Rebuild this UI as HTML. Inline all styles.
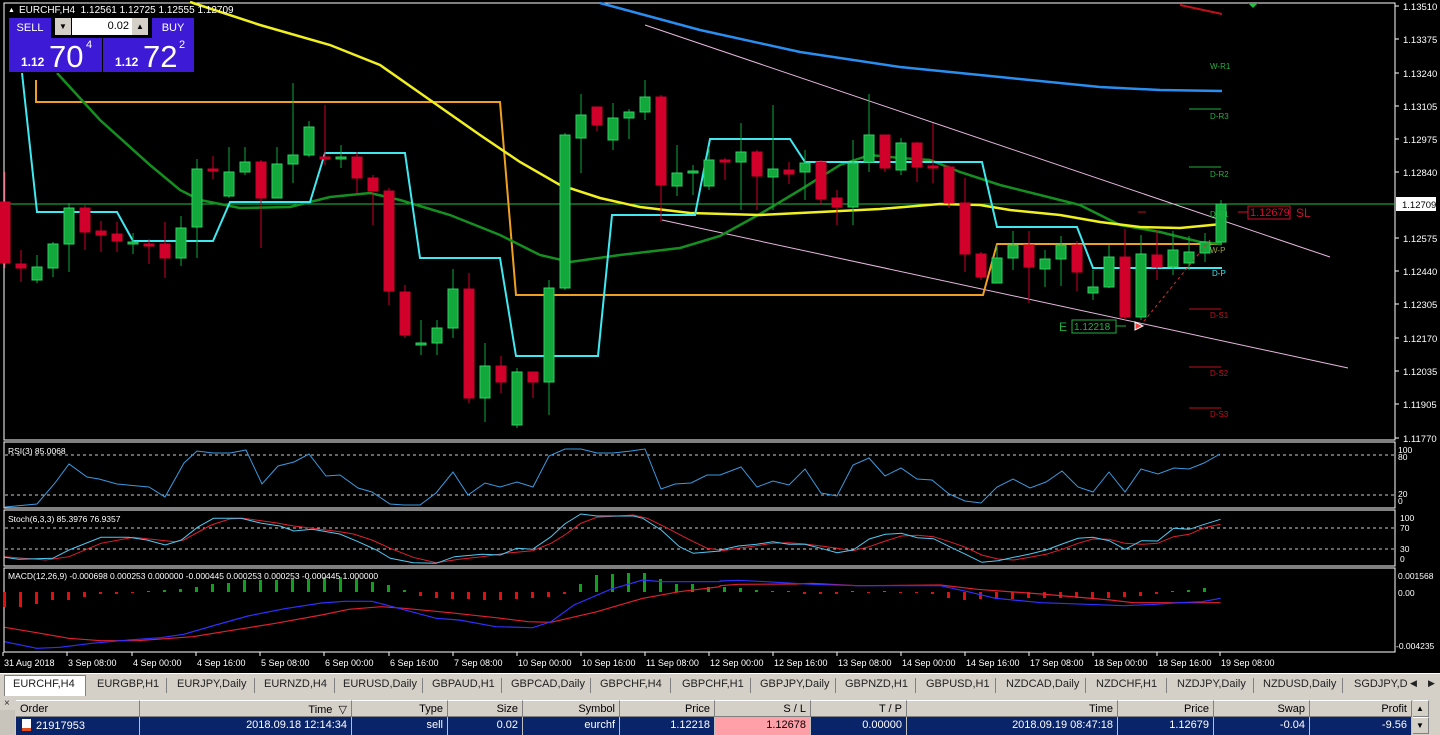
<!DOCTYPE html>
<html><head><meta charset="utf-8"><style>
*{margin:0;padding:0;box-sizing:border-box}
body{width:1440px;height:735px;background:#000;overflow:hidden;position:relative;font-family:"Liberation Sans",sans-serif}
svg{position:absolute;left:0;top:0}
.tabs{position:absolute;left:0;top:673px;width:1440px;height:23px;background:#d4d0c8;border-top:1px solid #fff;font-size:11px;color:#222}
.tabs span{position:absolute;top:4px;white-space:nowrap}
.tabs i{position:absolute;top:4px;width:1px;height:15px;background:#808080}
.tbl{position:absolute;left:0;top:696px;width:1440px;height:39px;background:#d4d0c8;font-size:11px}
.hd,.rw{position:absolute;height:17px;padding:2px 4px 0;white-space:nowrap;overflow:hidden}
.hd{top:4px;background:#d4d0c8;border-right:1px solid #808080;border-bottom:1px solid #808080;border-top:1px solid #fff;color:#000}
.rw{top:21px;background:#0a246a;color:#fff;border-right:1px solid #c0c0c0;height:18px}
.r{text-align:right}
</style></head><body>
<svg width="1440" height="673" id="s" xmlns="http://www.w3.org/2000/svg" font-family="Liberation Sans, sans-serif"></svg>

<div style="position:absolute;left:8px;top:17px;width:187px;height:56px;background:#000">
 <div style="position:absolute;left:1px;top:1px;width:42px;height:20px;background:#3c1ad6;color:#fff;font-size:11px;text-align:center;line-height:20px">SELL</div>
 <div style="position:absolute;left:47px;top:1px;width:16px;height:17px;background:#d4d0c8;font-size:8px;text-align:center;line-height:17px">▼</div>
 <div style="position:absolute;left:64px;top:1px;width:60px;height:17px;background:#fff;font-size:11px;text-align:right;padding-right:3px;line-height:17px">0.02</div>
 <div style="position:absolute;left:124px;top:1px;width:16px;height:17px;background:#d4d0c8;font-size:8px;text-align:center;line-height:17px">▲</div>
 <div style="position:absolute;left:144px;top:1px;width:42px;height:20px;background:#3c1ad6;color:#fff;font-size:11px;text-align:center;line-height:20px">BUY</div>
 <div style="position:absolute;left:1px;top:21px;width:93px;height:34px;background:#3c1ad6;color:#fff">
  <span style="position:absolute;left:12px;top:17px;font-size:12px;font-weight:bold">1.12</span>
  <span style="position:absolute;left:40px;top:1px;font-size:31px">70</span>
  <span style="position:absolute;left:77px;top:1px;font-size:11px">4</span></div>
 <div style="position:absolute;left:95px;top:21px;width:91px;height:34px;background:#3c1ad6;color:#fff">
  <span style="position:absolute;left:12px;top:17px;font-size:12px;font-weight:bold">1.12</span>
  <span style="position:absolute;left:40px;top:1px;font-size:31px">72</span>
  <span style="position:absolute;left:76px;top:1px;font-size:11px">2</span></div>
</div>

<div class="tabs">
 <div style="position:absolute;left:4px;top:1px;width:82px;height:21px;background:#fff;border:1px solid #808080;border-bottom:none"></div>
 <span style="left:13px">EURCHF,H4</span>
 <span style="left:97px">EURGBP,H1</span><i style="left:166px"></i>
 <span style="left:177px">EURJPY,Daily</span><i style="left:254px"></i>
 <span style="left:264px">EURNZD,H4</span><i style="left:334px"></i>
 <span style="left:343px">EURUSD,Daily</span><i style="left:422px"></i>
 <span style="left:432px">GBPAUD,H1</span><i style="left:501px"></i>
 <span style="left:511px">GBPCAD,Daily</span><i style="left:590px"></i>
 <span style="left:600px">GBPCHF,H4</span><i style="left:670px"></i>
 <span style="left:682px">GBPCHF,H1</span><i style="left:750px"></i>
 <span style="left:760px">GBPJPY,Daily</span><i style="left:835px"></i>
 <span style="left:845px">GBPNZD,H1</span><i style="left:915px"></i>
 <span style="left:926px">GBPUSD,H1</span><i style="left:995px"></i>
 <span style="left:1006px">NZDCAD,Daily</span><i style="left:1085px"></i>
 <span style="left:1096px">NZDCHF,H1</span><i style="left:1166px"></i>
 <span style="left:1177px">NZDJPY,Daily</span><i style="left:1253px"></i>
 <span style="left:1263px">NZDUSD,Daily</span><i style="left:1342px"></i>
 <span style="left:1354px">SGDJPY,D</span>
 <span style="left:1410px;font-size:9px">◀</span><span style="left:1428px;font-size:9px">▶</span>
</div>

<div class="tbl">
 <div style="position:absolute;left:4px;top:2px;font-size:10px;color:#333">×</div>
 <div style="position:absolute;left:0;top:14px;width:15px;height:25px;background:#c8c4bc"></div>
 <div class="hd" style="left:16px;width:124px">Order</div>
 <div class="hd r" style="left:140px;width:212px">Time &nbsp;▽</div>
 <div class="hd r" style="left:352px;width:96px">Type</div>
 <div class="hd r" style="left:448px;width:75px">Size</div>
 <div class="hd r" style="left:523px;width:97px">Symbol</div>
 <div class="hd r" style="left:620px;width:95px">Price</div>
 <div class="hd r" style="left:715px;width:96px">S / L</div>
 <div class="hd r" style="left:811px;width:96px">T / P</div>
 <div class="hd r" style="left:907px;width:211px">Time</div>
 <div class="hd r" style="left:1118px;width:96px">Price</div>
 <div class="hd r" style="left:1214px;width:96px">Swap</div>
 <div class="hd r" style="left:1310px;width:102px">Profit</div>
 <div class="hd" style="left:1413px;width:16px;font-size:8px;padding:3px 3px">▲</div>
 <div class="rw" style="left:16px;width:124px;padding-left:6px"><span style="display:inline-block;width:9px;height:12px;background:#fff;vertical-align:-2px;margin-right:5px;border-bottom:3px solid #e05020"></span>21917953</div>
 <div class="rw r" style="left:140px;width:212px">2018.09.18 12:14:34</div>
 <div class="rw r" style="left:352px;width:96px">sell</div>
 <div class="rw r" style="left:448px;width:75px">0.02</div>
 <div class="rw r" style="left:523px;width:97px">eurchf</div>
 <div class="rw r" style="left:620px;width:95px">1.12218</div>
 <div class="rw r" style="left:715px;width:96px;background:#ffa0a8;color:#000">1.12678</div>
 <div class="rw r" style="left:811px;width:96px">0.00000</div>
 <div class="rw r" style="left:907px;width:211px">2018.09.19 08:47:18</div>
 <div class="rw r" style="left:1118px;width:96px">1.12679</div>
 <div class="rw r" style="left:1214px;width:96px">-0.04</div>
 <div class="rw r" style="left:1310px;width:102px">-9.56</div>
 <div class="hd" style="left:1413px;top:21px;width:16px;font-size:8px;padding:3px 3px">▼</div>
</div>

<script>
const S=document.getElementById('s');let h='';
const G='#12a83c',GB='#2ed060',R='#d0002a';
function pl(pts,c,w,extra){h+=`<polyline fill="none" stroke="${c}" stroke-width="${w}" points="${pts.map(p=>p.join(',')).join(' ')}" ${extra||''}/>`}
function ln(x1,y1,x2,y2,c,w,extra){h+=`<line x1="${x1}" y1="${y1}" x2="${x2}" y2="${y2}" stroke="${c}" stroke-width="${w||1}" ${extra||''}/>`}
function tx(x,y,t,c,s,extra){h+=`<text x="${x}" y="${y}" fill="${c}" font-size="${s||10}" ${extra||''}>${t}</text>`}
// panel borders
h+=`<rect x="4" y="3" width="1391" height="437" fill="none" stroke="#fff"/>`;
h+=`<rect x="4" y="442" width="1391" height="66" fill="none" stroke="#fff"/>`;
h+=`<rect x="4" y="510" width="1391" height="56" fill="none" stroke="#fff"/>`;
h+=`<rect x="4" y="568" width="1391" height="84" fill="none" stroke="#fff"/>`;
// price axis
[[6,'1.13510'],[39,'1.13375'],[73,'1.13240'],[106,'1.13105'],[139,'1.12975'],[172,'1.12840'],[238,'1.12575'],[271,'1.12440'],[304,'1.12305'],[338,'1.12170'],[371,'1.12035'],[404,'1.11905'],[438,'1.11770']].forEach(a=>{ln(1395,a[0],1399,a[0],'#fff');tx(1403,a[0]+4,a[1],'#fff',9.5)});
// candles
const C=[[202,263,172,268,'r'],[264,268,250,282,'r'],[267,280,255,283,'g'],[244,268,242,277,'g'],[208,244,203,272,'g'],[208,232,205,250,'r'],[231,235,221,252,'r'],[234,241,222,252,'r'],[242,244,233,254,'g'],[244,246,239,264,'r'],[244,258,222,278,'r'],[228,258,216,266,'g'],
[169,227,159,258,'g'],[169,171,156,179,'r'],[172,196,147,198,'g'],[162,172,147,175,'g'],[162,198,160,248,'r'],[164,198,147,198,'g'],[155,164,83,183,'g'],[127,155,121,157,'g'],[157,159,105,165,'r'],[157,159,145,168,'g'],[157,178,152,193,'r'],[178,191,175,225,'r'],[191,291,188,305,'r'],[292,335,285,338,'r'],[343,345,320,355,'g'],[328,343,320,355,'g'],[289,328,269,338,'g'],[289,398,273,403,'r'],[366,398,343,422,'g'],[366,382,356,393,'r'],[372,425,368,428,'g'],[372,382,372,398,'r'],
[288,382,280,415,'g'],[135,288,133,290,'g'],[115,138,94,173,'g'],[107,125,107,131,'r'],[118,140,103,150,'g'],[112,118,109,139,'g'],[97,112,80,120,'g'],[97,185,95,222,'r'],[173,186,145,196,'g'],[171,173,165,195,'g'],[160,186,147,190,'g'],[160,162,158,180,'r'],[152,162,123,210,'g'],[152,176,150,210,'r'],[169,177,105,210,'g'],[170,174,162,184,'r'],[163,172,150,200,'g'],[162,199,160,205,'r'],[198,207,190,225,'r'],[163,207,140,225,'g'],[135,162,94,172,'g'],[135,168,135,172,'r'],[143,170,138,175,'g'],[143,167,142,182,'r'],[166,168,123,183,'r'],[167,203,165,208,'r'],[203,254,178,272,'r'],[254,277,252,280,'r'],[258,283,245,283,'g'],[245,258,231,270,'g'],[245,267,231,303,'r'],[259,269,250,287,'g'],[245,259,236,286,'g'],[245,272,241,291,'r'],[287,293,270,300,'g'],[257,287,245,288,'g'],[257,317,229,320,'r'],[254,317,235,320,'g'],[255,267,230,280,'r'],[250,267,231,275,'g'],[252,263,236,270,'g'],[242,253,233,262,'g'],[204,242,200,244,'g']];
// lines under candles
ln(4,204,1395,204,'#22c040',1);
pl([[645,25],[1330,257]],'#e8b8e0',1);pl([[662,220],[1348,368]],'#e8b8e0',1);
pl([[600,3],[700,30],[800,52],[900,67],[1000,77],[1100,87],[1160,90],[1222,91]],'#2a8ef0',2.5);
pl([[1180,5],[1222,14]],'#c0101a',2);
pl([[36,80],[36,102],[500,102],[516,295],[983,295],[997,244],[1222,244]],'#f0a020',2);
pl([[57,73],[100,120],[150,165],[180,190],[200,200],[240,208],[290,207],[330,197],[370,193],[400,200],[450,215],[500,235],[540,255],[570,262],[620,255],[680,248],[720,236],[760,214],[800,190],[840,165],[870,155],[900,158],[930,160],[960,172],[1000,185],[1040,195],[1080,205],[1120,225],[1160,232],[1200,242],[1222,244]],'#159020',2.5);
pl([[190,2],[260,25],[330,45],[380,65],[430,100],[480,135],[520,162],[560,185],[600,198],[640,207],[690,213],[760,215],[820,212],[880,209],[940,204],[980,205],[1010,210],[1060,215],[1100,222],[1140,227],[1180,228],[1222,224]],'#f0f020',2.5);
pl([[22,73],[37,212],[117,212],[133,241],[213,241],[230,202],[310,202],[325,153],[405,153],[420,258],[500,258],[516,356],[598,356],[612,215],[695,215],[710,139],[790,139],[805,162],[982,162],[997,227],[1077,227],[1093,268],[1222,268]],'#40e8f0',2);
C.forEach((c,i)=>{const x=5+16*i,col=c[4]=='g'?G:R;ln(x,c[2],x,c[3],col,1);let t=c[0],b=c[1];if(b-t<2){ln(x-5,t,x+5,t,col,2)}else h+=`<rect x="${x-5}" y="${t}" width="10" height="${b-t}" fill="${col}" stroke="${c[4]=='g'?GB:R}" stroke-width="1"/>`});
// pivots
tx(1210,69,'W-R1','#22b040',8);
ln(1189,109,1221,109,'#22b040');tx(1210,119,'D-R3','#22b040',8);
ln(1189,167,1221,167,'#22b040');tx(1210,177,'D-R2','#22b040',8);
tx(1210,217,'D-R1','#22b040',8);tx(1210,253,'W-P','#a0a040',8);tx(1212,276,'D-P','#40e8f0',8);
ln(1189,309,1221,309,'#c01020');tx(1210,318,'D-S1','#c01020',8);
ln(1189,367,1221,367,'#c01020');tx(1210,376,'D-S2','#c01020',8);
ln(1189,408,1221,408,'#c01020');tx(1210,417,'D-S3','#c01020',8);
ln(1138,212,1146,212,'#c01020');
h+=`<polygon points="1248,3 1258,3 1253,8" fill="#20c040"/>`;
ln(1238,212,1248,212,'#d01030');h+=`<rect x="1248" y="206" width="42" height="13" fill="none" stroke="#d01030"/>`;tx(1250,216,'1.12679','#d01030',11);tx(1296,217,'SL','#d01030',12);
h+=`<rect x="1072" y="320" width="44" height="13" fill="none" stroke="#22b040"/>`;tx(1074,330,'1.12218','#22b040',10);tx(1059,331,'E','#22b040',12);ln(1116,326,1126,326,'#22b040');
pl([[1140,326],[1210,240]],'#d03030',1,'stroke-dasharray="3,3"');
h+=`<polygon points="1135,322 1143,326 1135,330" fill="#f04040" stroke="#fff" stroke-width="1"/>`;
h+=`<rect x="1396" y="197" width="40" height="14" fill="#fff"/>`;tx(1402,208,'1.12709','#000',9.5);
tx(8,12,'▲','#fff',7);tx(19,13,'EURCHF,H4  1.12561 1.12725 1.12555 1.12709','#fff',10,'xml:space="preserve"');
// RSI
ln(5,455,1394,455,'#ccc',1,'stroke-dasharray="3,3"');ln(5,495,1394,495,'#ccc',1,'stroke-dasharray="3,3"');
pl([[5,507],[37,504],[55,483],[69,464],[87,477],[99,479],[117,484],[138,486],[149,487],[165,497],[184,463],[197,451],[213,453],[230,453],[246,450],[262,484],[278,466],[294,462],[309,454],[326,476],[340,475],[358,488],[372,492],[390,504],[404,505],[420,505],[436,493],[453,472],[468,495],[485,483],[500,487],[517,482],[533,487],[549,456],[565,449],[581,449],[597,453],[613,453],[631,451],[645,449],[661,489],[675,484],[691,483],[707,475],[720,475],[741,467],[757,487],[773,481],[789,485],[805,469],[821,493],[837,496],[853,465],[869,458],[885,476],[901,468],[917,479],[932,480],[949,494],[965,501],[981,503],[997,487],[1013,479],[1030,488],[1046,482],[1062,471],[1078,487],[1093,492],[1109,472],[1125,492],[1141,469],[1158,474],[1174,468],[1189,469],[1204,463],[1220,454]],'#3a9ae0',1);
tx(8,454,'RSI(3) 85.0068','#fff',8.5);
tx(1398,453,'100','#fff',8.5);tx(1398,460,'80','#fff',8.5);tx(1398,497,'20','#fff',8.5);tx(1398,504,'0','#fff',8.5);
// Stoch
ln(5,528,1394,528,'#ccc',1,'stroke-dasharray="3,3"');ln(5,549,1394,549,'#ccc',1,'stroke-dasharray="3,3"');
const cv=(a,ox)=>a.map(p=>[+(ox+p[0]/2.178).toFixed(1),+(440+p[1]/3).toFixed(1)]);
const sb1=[[10,352],[40,358],[115,355],[150,330],[220,292],[280,292],[320,300],[360,315],[395,300],[430,262],[465,235],[525,235],[570,250],[610,258],[640,273],[680,268],[740,282],[780,305],[820,330],[850,355],[900,368],[950,370],[990,350],[1050,343],[1090,345],[1125,325],[1160,328],[1200,290],[1230,252],[1265,222],[1300,228],[1380,228],[1400,235],[1440,270],[1480,320],[1510,340],[1568,333]];
const sb2=[[0,330],[40,318],[80,313],[115,305],[150,313],[185,313],[220,325],[255,338],[290,330],[325,297],[360,283],[395,280],[430,293],[465,296],[500,320],[535,343],[570,367],[605,362],[640,352],[675,342],[710,330],[745,312],[780,295],[812,292],[848,302],[882,328],[918,302],[953,303],[988,265],[1022,268],[1055,253],[1090,238]];
const sr1=[[10,350],[100,360],[150,350],[220,310],[290,292],[330,298],[380,305],[400,300],[460,255],[500,237],[530,235],[600,248],[640,258],[680,265],[740,275],[770,282],[810,300],[850,325],[900,352],[950,368],[1000,358],[1050,350],[1100,340],[1160,332],[1200,310],[1230,285],[1265,250],[1300,232],[1380,225],[1410,235],[1450,262],[1500,298],[1540,325],[1568,330]];
const sr2=[[0,333],[40,325],[80,317],[115,310],[150,308],[185,312],[220,318],[255,325],[290,332],[325,320],[360,303],[395,288],[430,286],[465,290],[500,305],[535,322],[570,345],[605,357],[640,360],[675,352],[710,343],[745,328],[780,310],[812,297],[848,298],[882,310],[918,313],[953,310],[988,290],[1022,283],[1055,263],[1090,253]];
pl(cv(sr1,0).concat(cv(sr2,720)),'#e02030',1);
pl(cv(sb1,0).concat(cv(sb2,720)),'#50c8f0',1);
tx(8,522,'Stoch(6,3,3) 85.3976 76.9357','#fff',8.5);
tx(1400,521,'100','#fff',8.5);tx(1400,531,'70','#fff',8.5);tx(1400,552,'30','#fff',8.5);tx(1400,562,'0','#fff',8.5);
// MACD
const hv=[-15,-15,-12,-8,-8,-5,-2,-2,-1,1,2,3,5,8,9,12,12,12,13,13,15,15,13,10,7,2,-4,-6,-7,-7,-8,-8,-7,-6,-5,-2,8,17,18,19,19,13,8,8,5,5,4,2,1,1,-2,-2,-2,1,-1,1,-1,-1,-2,-6,-8,-7,-7,-7,-6,-6,-6,-6,-6,-6,-5,-4,-2,1,2,4];
hv.forEach((v,i)=>{const x=5+16*i;if(v>0)h+=`<rect x="${x-2}" y="${592-v}" width="3" height="${v}" fill="#10a020"/>`;else h+=`<rect x="${x-2}" y="592" width="3" height="${-v}" fill="#e01010"/>`});
const mb1=[[10,605],[80,625],[130,622],[200,610],[280,600],[350,593],[400,583],[470,555],[540,528],[620,506],[700,489],[750,484],[810,484],[860,502],[950,535],[1000,540],[1080,560],[1160,563],[1200,545],[1250,495],[1330,448],[1400,420],[1440,425],[1568,425]];
const mb2=[[0,423],[40,421],[100,425],[200,433],[300,437],[480,437],[540,455],[600,475],[700,488],[800,493],[880,497],[950,493],[1000,488],[1050,485],[1090,475]];
const mr1=[[10,562],[80,578],[150,595],[220,602],[300,602],[360,596],[420,590],[500,572],[600,550],[700,525],[760,508],[830,500],[880,505],[980,518],[1080,533],[1150,545],[1200,547],[1300,515],[1400,475],[1480,455],[1568,440]];
const mr2=[[0,437],[40,433],[165,432],[200,430],[300,437],[480,435],[560,448],[700,462],[850,480],[900,488],[1000,488],[1090,488]];
pl(cv(mr1,0).concat(cv(mr2,720)),'#e02030',1.2);
pl(cv(mb1,0).concat(cv(mb2,720)),'#3030ff',1.2);
tx(8,579,'MACD(12,26,9) -0.000698 0.000253 0.000000 -0.000445 0.000253 0.000253 -0.000445 1.000000','#fff',8.5);
tx(1398,579,'0.001568','#fff',8.5);tx(1398,596,'0.00','#fff',8.5);tx(1396,649,'-0.004235','#fff',8.5);
// time axis
[['31 Aug 2018',3],['3 Sep 08:00',67],['4 Sep 00:00',132],['4 Sep 16:00',196],['5 Sep 08:00',260],['6 Sep 00:00',324],['6 Sep 16:00',389],['7 Sep 08:00',453],['10 Sep 00:00',517],['10 Sep 16:00',581],['11 Sep 08:00',645],['12 Sep 00:00',709],['12 Sep 16:00',773],['13 Sep 08:00',837],['14 Sep 00:00',901],['14 Sep 16:00',965],['17 Sep 08:00',1029],['18 Sep 00:00',1093],['18 Sep 16:00',1157],['19 Sep 08:00',1220]].forEach(a=>{ln(a[1],652,a[1],656,'#fff');tx(a[1]+1,666,a[0],'#fff',9)});
S.innerHTML=h;
</script>
</body></html>
